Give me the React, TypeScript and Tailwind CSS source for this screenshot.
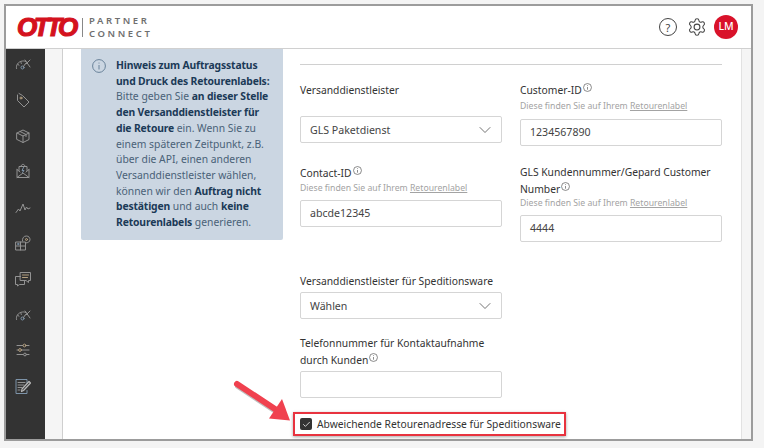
import { ChevronDown, Check } from 'lucide-react';
import type { ReactNode } from 'react';

const stroke = { fill: 'none', stroke: '#939393', strokeWidth: 1, strokeLinecap: 'round', strokeLinejoin: 'round' } as const;

function Icon({ children, w = 16 }: { children: ReactNode; w?: number }) {
  return (
    <svg width={w} height={w} viewBox="0 0 16 16" {...stroke}>
      {children}
    </svg>
  );
}

const SPEEDO = (
  <>
    <path d="M1.5 12.5c-.8-3 1.5-7 6-7.5 1.500-.2 3 .2 4 1" />
    <path d="M10 4l5 7M15 4l-4 4" />
    <circle cx="7.500" cy="11.500" r="1.500" stroke="#7d93a8" />
    <path d="M8.500 10.500l2-3M3 8.500l1 .7M6 6.500l.3 1" />
  </>
);

const NAV: ReactNode[] = [
  SPEEDO,
  <>
    <path d="M2.500 3v5.500l6.500 6.500 5-5-6.500-6.500L4 1.500" />
    <circle cx="6" cy="6" r="1" stroke="#b5a080" />
  </>,
  <>
    <path d="M2 5l6-3 6 3v6.500l-6 3-6-3z" />
    <path d="M2 5l6 3 6-3M8 8v6.500M5 3.500l6 3v2" />
  </>,
  <>
    <path d="M2 6.500v8h12v-8M2 14.500l6-4.500 6 4.500M2 6.500l3 2.500M14 6.500l-3 2.500" />
    <path d="M4 7.500V3.500h8v4M6 3.500c0-3 4-3 4 0" />
    <path d="M8.500 4.500L7 7.500h2L7.500 9.500" stroke="#7d93a8" />
  </>,
  <path d="M1 13.500l2.500-3.500 1.500 2 3-7 2 6 1.500-3 1.500 2 2-1" />,
  <>
    <path d="M1 7h9.500v8H1zM1 11h9.500M5.500 7v8" />
    <path d="M7.500 6c-.5-2.500 1-5 3.800-5 2.400 0 3.700 1.800 3.700 3.500 0 2.200-1.800 3.500-4.500 3.500" />
    <circle cx="11.500" cy="4.500" r="1" stroke="#b5a080" />
    <circle cx="3.200" cy="9" r=".7" stroke="#7d93a8" />
  </>,
  <>
    <path d="M5.500 1.500h10v8h-2v2l-2.500-2H5.500z" />
    <path d="M7.500 4h6M7.500 6.500h5" stroke="#b5a080" />
    <path d="M5.500 5.500H.5v8h2v1.500l2-1.500h5v-4" />
  </>,
  SPEEDO,
  <>
    <path d="M2 3.500h12M2 8h12M2 12.500h12" />
    <circle cx="9.500" cy="3.500" r="1.400" fill="#333" stroke="#b5a080" />
    <circle cx="5" cy="8" r="1.400" fill="#333" stroke="#b5a080" />
    <circle cx="10" cy="12.500" r="1.400" fill="#333" />
  </>,
  <>
    <path d="M12 5V1.500H1v14h11v-3" stroke="#7d93a8" />
    <path d="M3 4.500h7M3 7h6M3 9.500h4M3 12h2" />
    <path d="M6.500 13.500l.5-2.500 7-7.500 1.500 1.500-7 7.500z" strokeWidth="1.200" stroke="#b8b8b8" />
  </>,
];

function InfoDot({ size = 9 }: { size?: number }) {
  return (
    <svg width={size} height={size} viewBox="0 0 10 10" fill="none" stroke="#5f5f5f" strokeWidth="0.8" className="inline-block align-[2px] ml-px">
      <circle cx="5" cy="5" r="4.400" />
      <path d="M5 4.400v3M5 2.500v.8" />
    </svg>
  );
}

function Hint({ className = '' }: { className?: string }) {
  return (
    <p className={`whitespace-nowrap text-[8.700px] leading-[12px] text-[#a3a3a3] ${className}`}>
      Diese finden Sie auf Ihrem <span className="underline">Retourenlabel</span>
    </p>
  );
}

function TextField({ value, className = '' }: { value?: string; className?: string }) {
  return (
    <div className={`h-[27px] w-full rounded-[2px] border border-[#d5d5d5] bg-white px-[9px] text-[10.600px] leading-[25px] text-[#444] ${className}`}>
      {value}
    </div>
  );
}

function SelectField({ value, className = '' }: { value: string; className?: string }) {
  return (
    <div className={`flex h-[27px] w-full items-center justify-between rounded-[2px] border border-[#d5d5d5] bg-white pl-[9px] pr-[6px] text-[10.600px] text-[#444] ${className}`}>
      <span>{value}</span>
      <ChevronDown size={20} strokeWidth={0.9} className="text-[#444]" />
    </div>
  );
}

function B({ children }: { children: ReactNode }) {
  return <b className="font-bold tracking-[-0.150px] text-[#1b3a57]">{children}</b>;
}

export default function App() {
  return (
    <div className="relative h-[448px] w-[764px] overflow-hidden bg-[#f4f4f4] pl-[4px] pt-[4px] font-['Noto_Sans','Open_Sans',sans-serif]">
      <div className="flex h-[437px] w-[749px] flex-col overflow-hidden border-2 border-[#9c9c9c] bg-white">
        <header className="flex h-[43px] shrink-0 items-center border-b border-[#d0d0d0] bg-white pl-[11px] pr-[12px]">
          <span className="w-[60px] whitespace-nowrap font-['Liberation_Sans',sans-serif] text-[26px] font-bold italic leading-none tracking-[-3.500px] text-[#d4121e] [-webkit-text-stroke:1.200px_#d4121e]">
            OTTO
          </span>
          <span className="ml-[5px] h-[19px] w-px bg-[#888]" />
          <div className="ml-[6px] text-[9.500px] font-semibold leading-[13px] tracking-[2.600px] text-[#6f6f6f]">
            <div>PARTNER</div>
            <div>CONNECT</div>
          </div>
          <div className="ml-auto flex items-center gap-[10px]">
            <div className="flex h-[18px] w-[18px] items-center justify-center rounded-full border border-[#444] text-[11px] leading-none text-[#444]">?</div>
            <svg width="20" height="20" viewBox="0 0 24 24" fill="none" stroke="#444" strokeWidth="1.300" strokeLinejoin="round">
              <path d="M9.671 4.136a2.34 2.34 0 0 1 4.659 0 2.34 2.34 0 0 0 3.319 1.915 2.34 2.34 0 0 1 2.33 4.033 2.34 2.34 0 0 0 0 3.831 2.34 2.34 0 0 1-2.33 4.033 2.34 2.34 0 0 0-3.319 1.915 2.34 2.34 0 0 1-4.659 0 2.34 2.34 0 0 0-3.32-1.915 2.34 2.34 0 0 1-2.33-4.033 2.34 2.34 0 0 0 0-3.831A2.34 2.34 0 0 1 6.35 6.051a2.34 2.34 0 0 0 3.319-1.915" />
              <circle cx="12" cy="12" r="3.500" />
            </svg>
            <div className="ml-[-3px] mr-px flex h-[24px] w-[24px] items-center justify-center rounded-full bg-[#d9122a] text-[10.500px] font-medium text-white">LM</div>
          </div>
        </header>

        <div className="flex min-h-0 flex-1">
          <nav className="flex w-[39px] shrink-0 flex-col items-center gap-[19.800px] bg-[#333] pr-[6px] pt-[7px]">
            {NAV.map((icon, i) => (
              <Icon key={i}>{icon}</Icon>
            ))}
          </nav>
          <div className="w-[18px] shrink-0 border-r border-[#cfcfcf] bg-[#f5f5f5]" />

          <main className="flex min-w-0 flex-1 items-start pl-[18px]">
            <aside className="flex h-[191px] w-[202px] shrink-0 gap-[10px] rounded-b-[2px] bg-[#cbd6e2] pl-[11px] pr-[2px] pt-[9px]">
              <svg width="14" height="14" viewBox="0 0 14 14" fill="none" stroke="#5e7891" strokeWidth="0.900" className="mt-px shrink-0">
                <circle cx="7" cy="7" r="6.400" />
                <path d="M7 6v4.500M7 3.600v.9" />
              </svg>
              <p className="whitespace-nowrap text-[10.350px] leading-[15.700px] text-[#4a6278]">
                <B>Hinweis zum Auftragsstatus</B>
                <br />
                <B>und Druck des Retourenlabels:</B>
                <br />
                Bitte geben Sie <B>an dieser Stelle</B>
                <br />
                <B>den Versanddienstleister für</B>
                <br />
                <B>die Retoure</B> ein. Wenn Sie zu
                <br />
                einem späteren Zeitpunkt, z.B.
                <br />
                über die API, einen anderen
                <br />
                Versanddienstleister wählen,
                <br />
                können wir den <B>Auftrag nicht</B>
                <br />
                <B>bestätigen</B> und auch <B>keine</B>
                <br />
                <B>Retourenlabels</B> generieren.
              </p>
            </aside>

            <section className="ml-[17px] w-[422px] pt-[15px]">
              <div className="h-px bg-[#d0d0d0]" />
              <div className="mt-[17px] grid grid-cols-2 gap-x-[18px] text-[10.300px] leading-[16px] text-[#333]">
                <div>
                  <label className="block">Versanddienstleister</label>
                  <SelectField value="GLS Paketdienst" className="mt-[18px]" />
                  <label className="mt-[22px] block">
                    Contact-ID
                    <InfoDot />
                  </label>
                  <Hint className="mt-px" />
                  <TextField value="abcde12345" className="mt-[6px]" />
                  <label className="mt-[46px] block whitespace-nowrap">Versanddienstleister für Speditionsware</label>
                  <SelectField value="Wählen" className="mt-[3px]" />
                  <label className="mt-[16px] block whitespace-nowrap leading-[17px]">
                    Telefonnummer für Kontaktaufnahme
                    <br />
                    durch Kunden
                    <InfoDot />
                  </label>
                  <TextField className="mt-[2px]" />
                  <div className="mt-[18px] flex items-center gap-[5px] whitespace-nowrap">
                    <span className="flex h-[12px] w-[12px] shrink-0 items-center justify-center rounded-[2px] bg-[#333]">
                      <Check size={9} strokeWidth={2} className="text-white" />
                    </span>
                    <span>Abweichende Retourenadresse für Speditionsware</span>
                  </div>
                </div>
                <div>
                  <label className="block">
                    Customer-ID
                    <InfoDot />
                  </label>
                  <Hint className="mt-[2px]" />
                  <TextField value="1234567890" className="mt-[7px]" />
                  <label className="mt-[18px] block leading-[16.500px]">
                    GLS Kundennummer/Gepard Customer Number
                    <InfoDot />
                  </label>
                  <Hint />
                  <TextField value="4444" className="mt-[6px]" />
                </div>
              </div>
            </section>
          </main>
          <div className="ml-[18px] w-[10px] shrink-0 border-l border-[#e2e2e2] bg-[#f5f5f5]" />
        </div>
      </div>

      {/* annotation over the screenshot */}
      <div className="absolute left-[293px] top-[412px] h-[24px] w-[273px] border-2 border-[#e8333f] shadow-[0_1px_3px_rgba(0,0,0,0.35)]" />
      <svg className="absolute left-[230px] top-[376px]" width="66" height="50" viewBox="0 0 66 50">
        <path d="M7 8L48 35" stroke="rgba(0,0,0,0.25)" strokeWidth="6" strokeLinecap="round" transform="translate(1 2)" />
        <path d="M7 8L48 35" stroke="#f0414f" strokeWidth="6" strokeLinecap="round" />
        <path d="M60 44.500L39 42.500l13-19.500z" fill="#f0414f" />
      </svg>
    </div>
  );
}
